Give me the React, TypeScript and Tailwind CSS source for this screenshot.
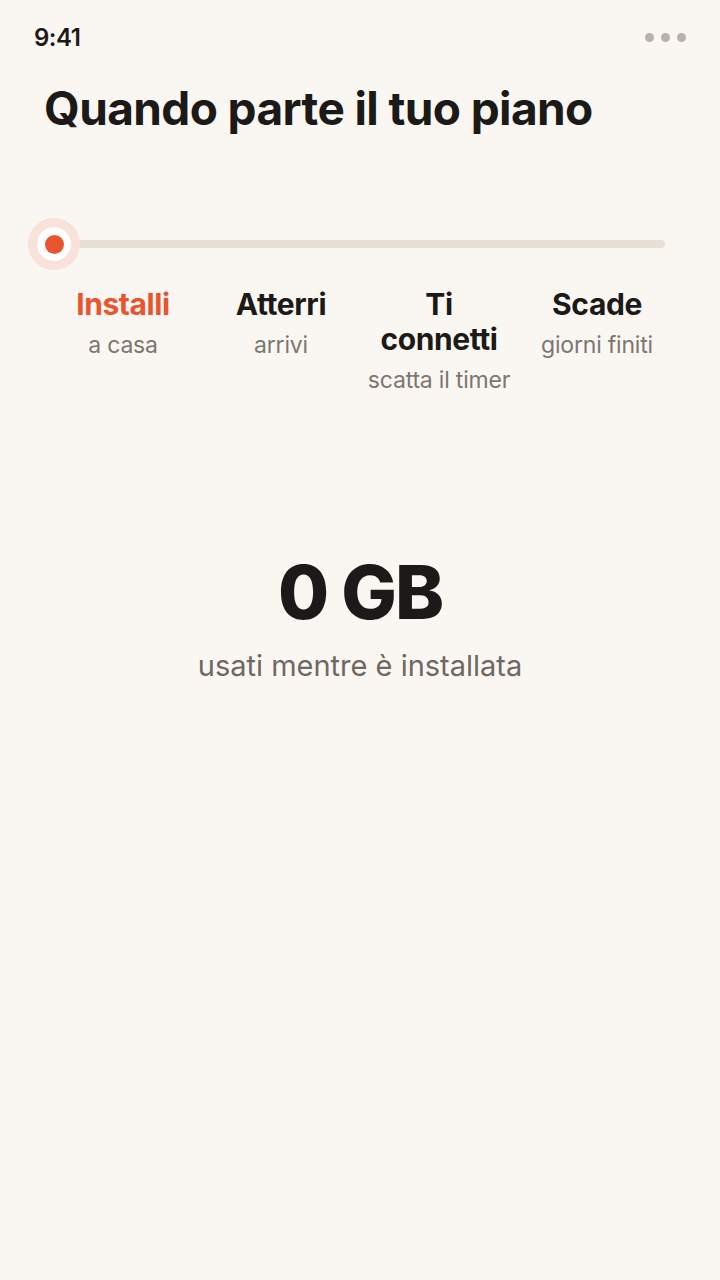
import React from 'react';

const steps = [
  { title: 'Installi', sub: 'a casa', active: true },
  { title: 'Atterri', sub: 'arrivi', active: false },
  { title: 'Ti connetti', sub: 'scatta il timer', active: false },
  { title: 'Scade', sub: 'giorni finiti', active: false },
];

export default function App() {
  return (
    <div
      className="min-h-[1280px] w-[720px] bg-[#faf7f2] text-[#1c1a18]"
      style={{ fontFamily: 'Inter, "Noto Sans", sans-serif' }}
    >
      {/* status bar */}
      <div className="flex items-center justify-between pl-[34px] pr-[34px] pt-[23px] h-[52px]">
        <span className="text-[24px] font-semibold tracking-[-0.5px] leading-none">9:41</span>
        <div className="flex gap-[7px]">
          <span className="w-[9px] h-[9px] rounded-full bg-[#b8b1aa]" />
          <span className="w-[9px] h-[9px] rounded-full bg-[#b8b1aa]" />
          <span className="w-[9px] h-[9px] rounded-full bg-[#b8b1aa]" />
        </div>
      </div>

      <h1 className="pl-[44px] mt-[28px] text-[46px] font-bold tracking-[-0.6px] leading-[56px]">
        Quando parte il tuo piano
      </h1>

      {/* slider */}
      <div className="relative mt-[82px] ml-[28px] mr-[55px] h-[52px] flex items-center">
        <div className="ml-[26px] h-[8px] flex-1 rounded-full bg-[#e8e0d7]" />
        <div className="absolute left-0 top-0 w-[52px] h-[52px] rounded-full bg-[#f8e2da] flex items-center justify-center">
          <div className="w-[34px] h-[34px] rounded-full bg-white flex items-center justify-center">
            <div className="w-[19px] h-[19px] rounded-full bg-[#e8552f]" />
          </div>
        </div>
      </div>

      <div className="grid grid-cols-4 ml-[44px] w-[632px] mt-[17px]">
        {steps.map((s) => (
          <div key={s.title} className="flex flex-col items-center text-center px-[2px]">
            <div
              className={`max-w-[140px] text-[30px] font-bold tracking-[-0.4px] leading-[35px] ${
                s.active ? 'text-[#e8552f]' : 'text-[#1c1a18]'
              }`}
            >
              {s.title}
            </div>
            <div className="mt-[8px] text-[23px] leading-[30px] text-[#7c7671] tracking-[-0.2px]">{s.sub}</div>
          </div>
        ))}
      </div>

      <div className="mt-[157px] flex flex-col items-center">
        <div className="text-[74px] font-extrabold tracking-[-2px] leading-[80px]">0 GB</div>
        <div className="mt-[16px] text-[29px] leading-[36px] text-[#6e6862]">usati mentre è installata</div>
      </div>
    </div>
  );
}
